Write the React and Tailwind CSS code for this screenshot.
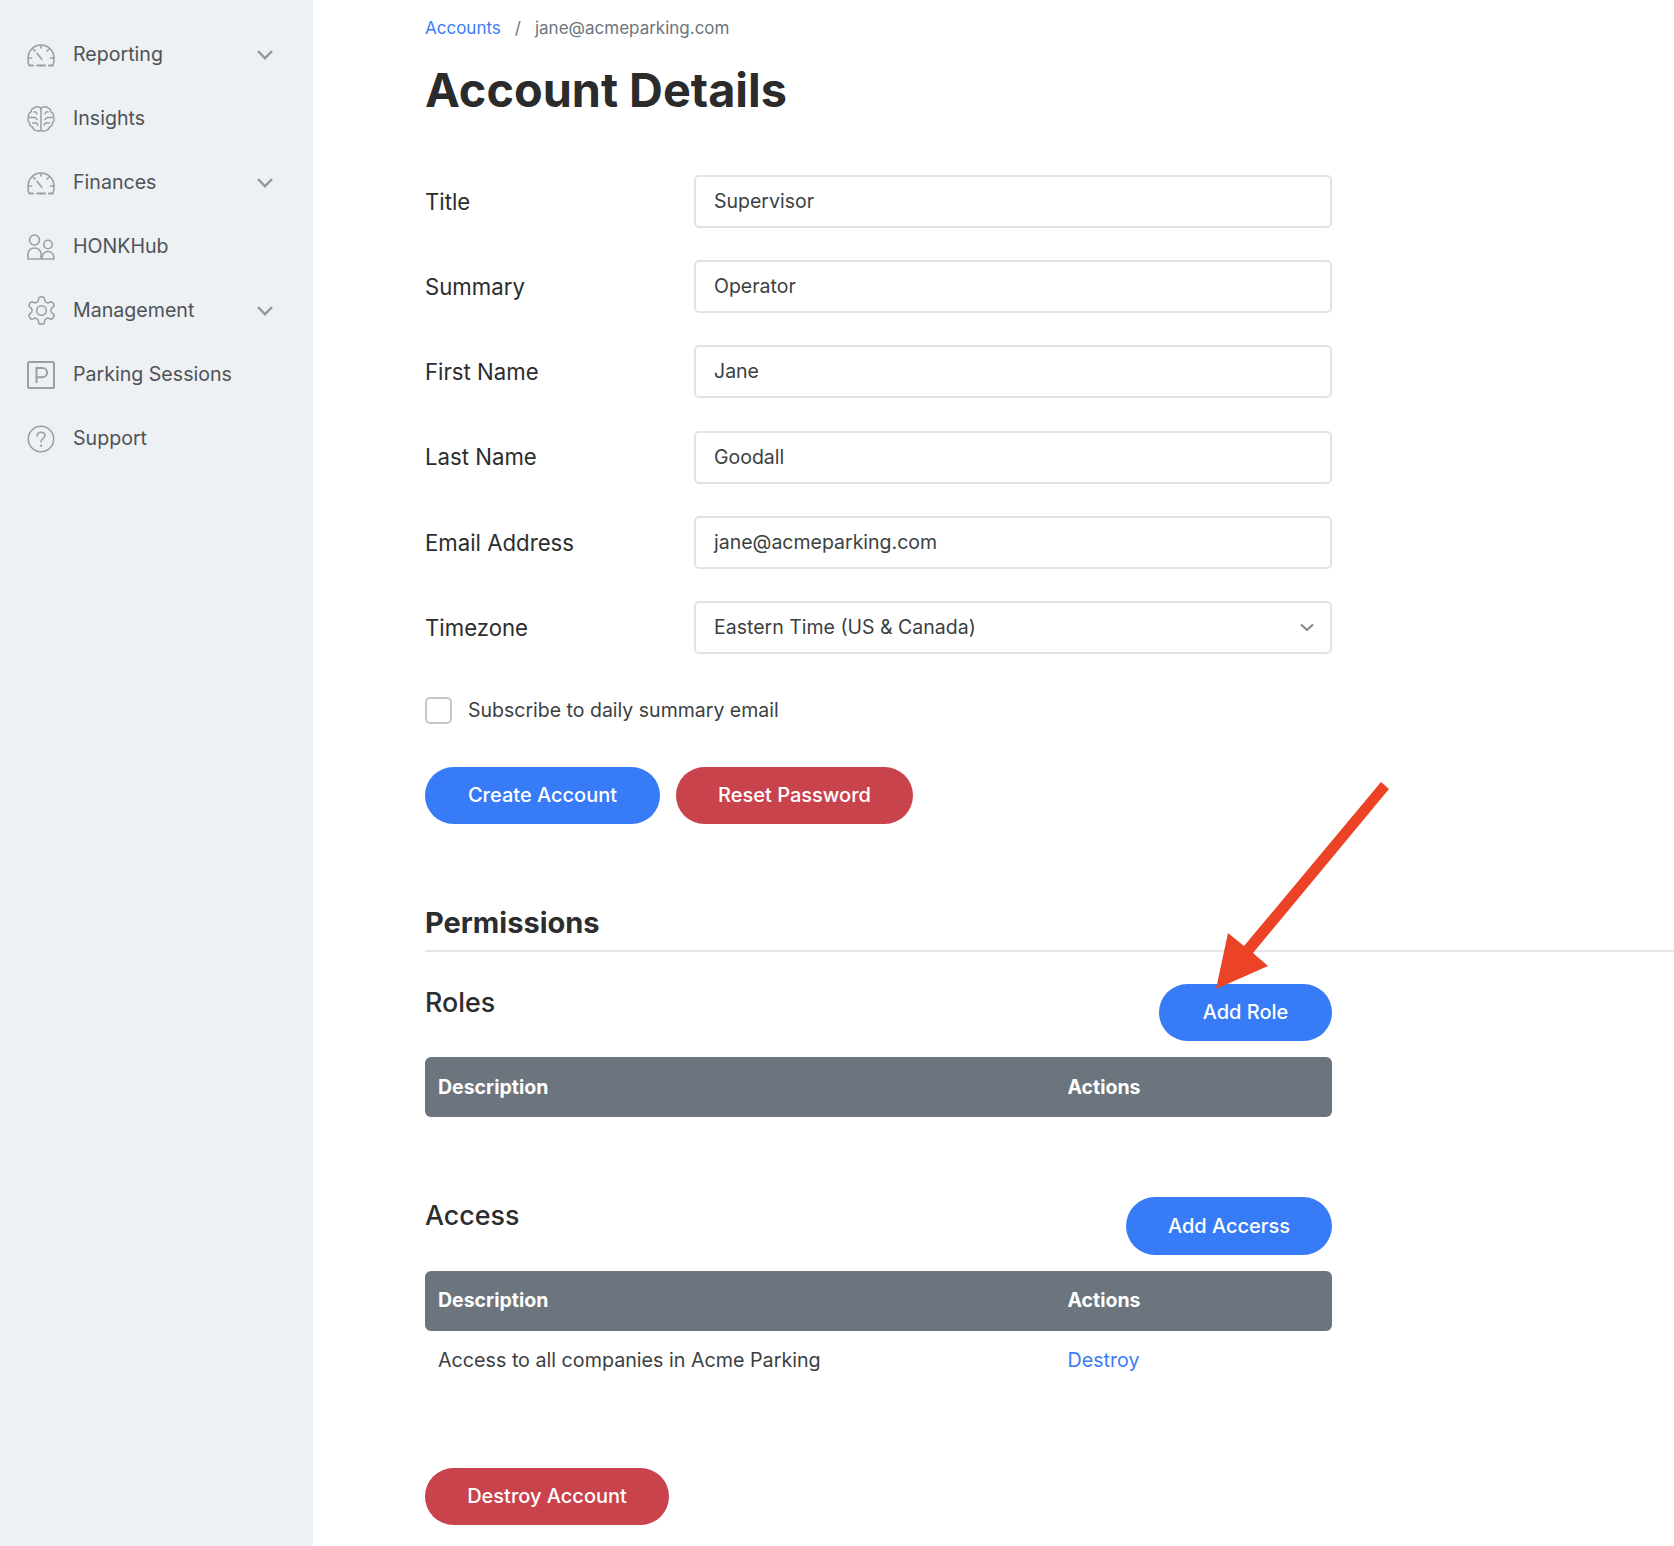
import React from "react";

const Gauge = () => (
  <svg width="28" height="24" viewBox="0 0 28 24" fill="none" stroke="#9b9fa3" strokeWidth="1.6" strokeLinecap="round">
    <path d="M2.200 22.500C1.200 20.800 1 19 1 15.500 1 7.500 6.800 2 14 2s13 5.500 13 13.500c0 3.500-.2 5.300-1.200 7" />
    <path d="M2.500 22.500h3.500M22 22.500h3.500M10 22.500h8" strokeWidth="2" />
    <path d="M14 2v3M6 6l2 2M22 6l-2 2M1.500 15h3M23.500 15h3M10 10.500l5 6" />
  </svg>
);
const Brain = () => (
  <svg width="28" height="28" viewBox="0 0 28 28" fill="none" stroke="#9b9fa3" strokeWidth="1.500" strokeLinecap="round" strokeLinejoin="round">
    <path d="M14 3.500v22M14 3.500C13 1.800 9 1 7 3 5 3.500 4 5 4 7 2 8 1 10 1.500 12c-1 2-.5 4.500 1 5.500-.3 2.500 1 4 3 4.500.7 3 4.500 5 8.500 3.500" />
    <path d="M14 3.500c1-1.700 5-2.500 7-.5 2 .5 3 2 3 4 2 1 3 3 2.500 5 1 2 .5 4.500-1 5.500.3 2.500-1 4-3 4.500-.7 3-4.500 5-8.500 3.500" />
    <path d="M2 12.500h6l2 2M7 7c1.500-.5 3 .5 3 2M5.500 18h4l1.500 2M26 12.500h-6l-2 2M21 7c-1.500-.5-3 .5-3 2M22.500 18h-4L17 20" />
  </svg>
);
const People = () => (
  <svg width="28" height="26" viewBox="0 0 28 26" fill="none" stroke="#9b9fa3" strokeWidth="1.600" strokeLinejoin="round">
    <circle cx="7.500" cy="6" r="5" />
    <circle cx="21" cy="10.500" r="4.200" />
    <path d="M1 25v-5c0-3.500 2.800-6 6.500-6s6.500 2.500 6.500 6v5z" />
    <path d="M15 25c0-4.500 2.500-7.500 6-7.500s6 3 6 7.500z" />
  </svg>
);
const Gear = () => (
  <svg width="33" height="33" viewBox="0 0 24 24" fill="none" stroke="#9b9fa3" strokeWidth="1.100" strokeLinecap="round" strokeLinejoin="round" className="shrink-0">
    <path d="M12.220 2h-.44a2 2 0 0 0-2 2v.18a2 2 0 0 1-1 1.730l-.43.25a2 2 0 0 1-2 0l-.15-.08a2 2 0 0 0-2.730.73l-.22.380a2 2 0 0 0 .73 2.730l.15.100a2 2 0 0 1 1 1.720v.510a2 2 0 0 1-1 1.740l-.15.090a2 2 0 0 0-.73 2.730l.22.380a2 2 0 0 0 2.730.73l.15-.08a2 2 0 0 1 2 0l.43.250a2 2 0 0 1 1 1.730V20a2 2 0 0 0 2 2h.44a2 2 0 0 0 2-2v-.18a2 2 0 0 1 1-1.730l.43-.25a2 2 0 0 1 2 0l.15.080a2 2 0 0 0 2.730-.73l.22-.390a2 2 0 0 0-.73-2.730l-.15-.08a2 2 0 0 1-1-1.740v-.500a2 2 0 0 1 1-1.740l.15-.09a2 2 0 0 0 .73-2.730l-.22-.380a2 2 0 0 0-2.730-.73l-.15.080a2 2 0 0 1-2 0l-.43-.25a2 2 0 0 1-1-1.730V4a2 2 0 0 0-2-2z" />
    <circle cx="12" cy="12" r="3.500" />
  </svg>
);
const ParkingIcon = () => (
  <svg width="28" height="28" viewBox="0 0 28 28" fill="none" stroke="#9b9fa3" strokeWidth="2">
    <rect x="1" y="1" width="26" height="26" rx="1.500" />
    <path d="M9.500 22V7h6a4.600 4.600 0 0 1 0 9.200h-6" />
  </svg>
);
const Help = () => (
  <svg width="28" height="28" viewBox="0 0 28 28" fill="none" stroke="#9b9fa3" strokeWidth="1.600" strokeLinecap="round">
    <circle cx="14" cy="14" r="12.700" />
    <path d="M10.200 11c0-2.300 1.700-3.800 3.900-3.800s3.800 1.400 3.800 3.400c0 3-3.900 3-3.900 6.200" />
    <path d="M14 20.500v.4" strokeWidth="2" />
  </svg>
);
const Chevron = () => (
  <svg width="16" height="10" viewBox="0 0 16 10" fill="none" stroke="#96999c" strokeWidth="2.400">
    <path d="M1 1.200l7 7 7-7" />
  </svg>
);

const nav = [
  ["Reporting", Gauge, true],
  ["Insights", Brain, false],
  ["Finances", Gauge, true],
  ["HONKHub", People, false],
  ["Management", Gear, true],
  ["Parking Sessions", ParkingIcon, false],
  ["Support", Help, false],
];

const fields = [
  ["Title", "Supervisor"],
  ["Summary", "Operator"],
  ["First Name", "Jane"],
  ["Last Name", "Goodall"],
  ["Email Address", "jane@acmeparking.com"],
];

const Pill = ({ color, width, children }) => (
  <button className={`h-[57.5px] rounded-full text-white text-[20px] font-medium ${color} ${width}`}>{children}</button>
);

const TableHead = () => (
  <div className="h-[60px] bg-[#6c757d] rounded-[6px] flex items-center text-white font-bold text-[19.5px]">
    <div className="w-[642.500px] pl-[13px]">Description</div>
    <div>Actions</div>
  </div>
);

export default function App() {
  return (
    <div className="relative flex h-[1546px] overflow-hidden bg-white text-[#2c2d2e] text-[19.6px] font-['Inter',sans-serif]">
      <aside className="w-[313px] shrink-0 bg-[#edf1f4] pt-[22.5px]">
        {nav.map(([label, Icon, hasChevron]) => (
          <div key={label} className="h-[64px] flex items-center pl-[27px] pr-[40px] text-[#4f5357]">
            <div className="w-[28px] flex justify-center shrink-0"><Icon /></div>
            <span className="ml-[18px] flex-1">{label}</span>
            {hasChevron && <Chevron />}
          </div>
        ))}
      </aside>
      <main className="flex-1 pl-[112px] pt-[16px]">
        <div className="w-[907px]">
          <nav className="h-[26px] flex items-center text-[17px]">
            <span className="text-[#3a7cf6]">Accounts</span>
            <span className="mx-[14px] text-[#6c757d]">/</span>
            <span className="text-[#6c757d]">jane@acmeparking.com</span>
          </nav>
          <h1 className="mt-[19px] h-[58px] flex items-center text-[46.8px] font-bold text-[#2b2b2b]">Account Details</h1>
          <form className="mt-[55.67px]">
            <div className="flex flex-col gap-[32.33px]">
              {fields.map(([label, value]) => (
                <div key={label} className="flex items-center">
                  <label className="w-[269px] text-[22.2px]">{label}</label>
                  <div className="w-[638px] h-[53px] border-2 border-[#e0e4e8] rounded-[5px] pl-[18px] flex items-center text-[#3c3f42] text-[19.5px]">{value}</div>
                </div>
              ))}
              <div className="flex items-center">
                <label className="w-[269px] text-[22.2px]">Timezone</label>
                <div className="w-[638px] h-[53px] border-2 border-[#e0e4e8] rounded-[5px] pl-[18px] pr-[16px] flex items-center justify-between text-[#3c3f42] text-[19.5px]">
                  <span>Eastern Time (US &amp; Canada)</span>
                  <svg width="14" height="9" viewBox="0 0 14 9" fill="none" stroke="#7f858a" strokeWidth="2"><path d="M1 1.500l6 5.500 6-5.500" /></svg>
                </div>
              </div>
            </div>
            <div className="mt-[42.33px] flex items-center h-[28px]">
              <div className="w-[27px] h-[27px] rounded-[5px] border-2 border-[#c3c8cd] bg-white" />
              <span className="ml-[16px] text-[19.5px] text-[#3c3f42]">Subscribe to daily summary email</span>
            </div>
            <div className="mt-[42px] flex gap-[16px]">
              <Pill color="bg-[#377bf6]" width="w-[235px]">Create Account</Pill>
              <Pill color="bg-[#c9434d]" width="w-[237px]">Reset Password</Pill>
            </div>
          </form>
        </div>
        <h2 className="mt-[78.5px] h-[49px] flex items-center border-b-2 border-[#e4e6ea] text-[29px] font-bold pb-[6px]">Permissions</h2>
        <div className="w-[907px]">
          <div className="mt-[32px] flex justify-between items-start">
            <h3 className="text-[26.8px] font-medium h-[37px] flex items-center">Roles</h3>
            <Pill color="bg-[#377bf6]" width="w-[173px]">Add Role</Pill>
          </div>
          <div className="mt-[16px]"><TableHead /></div>
          <div className="mt-[80px] flex justify-between items-start">
            <h3 className="text-[26.8px] font-medium h-[36px] flex items-center">Access</h3>
            <Pill color="bg-[#377bf6]" width="w-[206px]">Add Accerss</Pill>
          </div>
          <div className="mt-[16px]"><TableHead /></div>
          <div className="h-[60px] flex items-center text-[19.7px] text-[#3c3f42]">
            <div className="w-[642.500px] pl-[13px]">Access to all companies in Acme Parking</div>
            <div className="text-[#3a7cf6] text-[19.7px]">Destroy</div>
          </div>
          <div className="mt-[77px]">
            <Pill color="bg-[#c9434d]" width="w-[244px]">Destroy Account</Pill>
          </div>
        </div>
      </main>
      <svg className="absolute left-0 top-0 pointer-events-none" width="1674" height="1546" viewBox="0 0 1674 1546">
        <polygon points="1381,782 1389,789 1253,953 1268,966 1216,989 1228,933 1244,946" fill="#ec4225" />
      </svg>
    </div>
  );
}
